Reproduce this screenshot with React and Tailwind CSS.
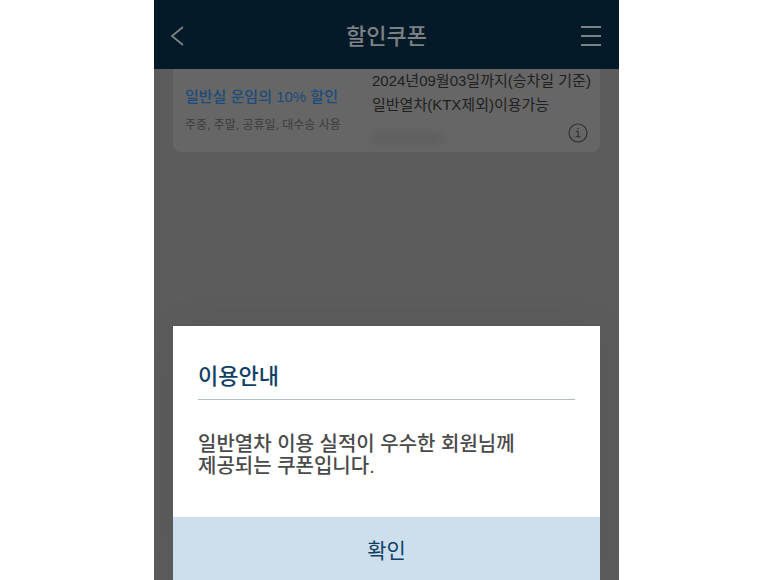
import React from 'react';

const coupon = {
  title: '일반실 운임의 10% 할인',
  days: '주중, 주말, 공휴일, 대수송 사용',
  expires: '2024년09월03일까지(승차일 기준)',
  trains: '일반열차(KTX제외)이용가능',
};

const Header = () => (
  <header className="flex h-[69px] items-center justify-between bg-[#051a28] px-4 pt-0.5 text-[#7d8184]">
    <button type="button" aria-label="뒤로" className="flex w-6">
      <svg className="h-5 w-4" viewBox="0 0 16 20" fill="none" stroke="currentColor" strokeWidth="1.8">
        <path d="M13 1L2 10l11 9" />
      </svg>
    </button>
    <h1 className="pt-0.5 text-[22px] leading-8 font-medium">할인쿠폰</h1>
    <button type="button" aria-label="메뉴" className="flex w-6 justify-end">
      <svg className="h-6 w-6" viewBox="0 0 24 24" fill="none" stroke="currentColor" strokeWidth="1.8">
        <path d="M2 3h20M2 12h20M2 21h20" />
      </svg>
    </button>
  </header>
);

const CouponCard = () => (
  <article className="flex h-[83px] rounded-b-lg bg-[#666] pl-3 whitespace-nowrap">
    <div className="w-[187px] pt-4">
      <h2 className="text-[15px] leading-6 font-medium text-[#1b4c7a]">{coupon.title}</h2>
      <p className="pt-1 text-[12px] leading-6 text-[#3c3c3c]">{coupon.days}</p>
    </div>
    <div className="flex-1 text-[15px] leading-6 text-[#202020]">
      <p>{coupon.expires}</p>
      <p>{coupon.trains}</p>
      <div className="flex items-center justify-between pt-1 pr-3">
        <span className="mt-3 h-2 w-[70px] bg-[#5c5c5c] blur-xs" />
        <button type="button" aria-label="쿠폰 안내" className="flex pt-0.5 text-[#303030]">
          <svg className="h-5 w-5" viewBox="0 0 20 20" fill="none" stroke="currentColor">
            <circle cx="10" cy="10" r="9" strokeWidth="1.2" />
            <path d="M8 8.5h2.2v5M7.5 13.8h5" strokeWidth="1.1" />
            <circle cx="10" cy="5.8" r="0.8" fill="currentColor" stroke="none" />
          </svg>
        </button>
      </div>
    </div>
  </article>
);

const NoticeDialog = () => (
  <section
    role="dialog"
    aria-labelledby="notice-title"
    className="mt-auto bg-white shadow-[0_0_40px_rgba(0,0,0,0.06)]"
  >
    <div className="px-[25px] pt-[35px] pb-10">
      <h2
        id="notice-title"
        className="border-b border-[#b4bec8] pb-1.5 text-[22px] leading-8 font-medium text-[#103f66]"
      >
        이용안내
      </h2>
      <p className="pt-[33px] text-[20px] leading-[22px] font-medium text-[#4a4a4a]">
        일반열차 이용 실적이 우수한 회원님께
        <br />
        제공되는 쿠폰입니다.
      </p>
    </div>
    <button
      type="button"
      className="h-[63px] w-full bg-[#cddfed] pt-1 text-[21px] leading-8 text-[#103f66]"
    >
      확인
    </button>
  </section>
);

const App = () => {
  return (
    <div className="min-h-screen bg-white font-['Liberation_Sans','Noto_Sans_CJK_KR',sans-serif]">
      <div className="mx-auto flex min-h-screen w-full max-w-[465px] flex-col overflow-hidden bg-[#5c5c5c]">
        <Header />
        <main className="flex flex-1 flex-col px-[19px]">
          <CouponCard />
          <hr className="mt-[10px] mb-8 border-[#595959]" />
          <NoticeDialog />
        </main>
      </div>
    </div>
  );
};

export default App;
